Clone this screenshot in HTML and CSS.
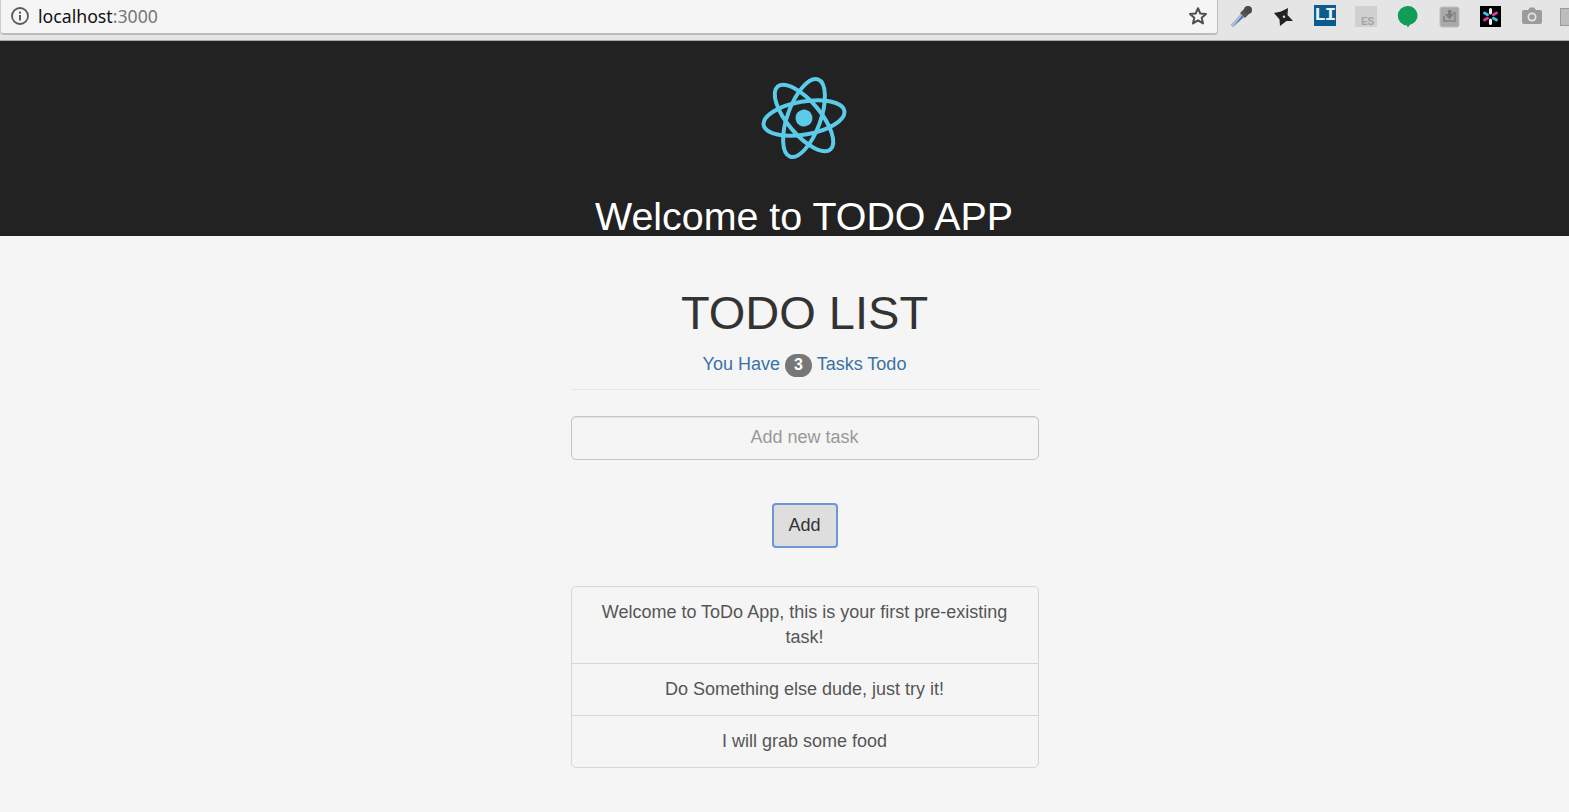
FILE: index.html
```html
<!DOCTYPE html>
<html lang="en">
<head>
<meta charset="utf-8">
<title>TODO APP</title>
<link rel="stylesheet" href="styles.css">
</head>
<body>
<div class="chrome">
  <div class="omnibox">
    <svg class="info" width="20" height="20" viewBox="0 0 20 20"><circle cx="10" cy="10" r="8" fill="none" stroke="#5a5a5a" stroke-width="1.8"/><rect x="9" y="9" width="2" height="5.5" fill="#5a5a5a"/><rect x="9" y="5.6" width="2" height="2" fill="#5a5a5a"/></svg>
    <span class="url">localhost<span class="port">:3000</span></span>
    <svg class="star" width="20" height="20" viewBox="0 0 20 20"><path d="M10 2.200l2.300 5.300 5.700.5-4.300 3.800 1.300 5.600-5-3-5 3 1.300-5.600L2 8l5.700-.5z" fill="none" stroke="#4e4e4e" stroke-width="2" stroke-linejoin="round"/></svg>
  </div>
  <div class="exts">
    <svg class="ext" width="24" height="24" viewBox="0 0 24 24"><path d="M3 23l-2-2 10-11 3 3z" fill="#4f72c8"/><path d="M3 23l-2-2 10-11 1.300 1.300z" fill="#b4bccf"/><path d="M10 9l4-4 5 5-4 4z" fill="#555"/><circle cx="18" cy="6" r="4" fill="#4a4a4a"/></svg>
    <svg class="ext" width="24" height="24" viewBox="0 0 24 24"><path d="M3 9L10 7.500 17 4 16.500 11 22 17 15.500 17 9 22 8.500 15.500z" fill="#222"/><circle cx="13" cy="12.700" r="1.300" fill="#d0d0d0"/></svg>
    <div class="ext li">LI</div>
    <div class="ext es">ES</div>
    <svg class="ext" width="24" height="24" viewBox="0 0 24 24"><path d="M12 2a9.500 9.500 0 0 1 2 18.800L11.800 23.500 11 21.400A9.500 9.500 0 0 1 12 2z" fill="#0f9d58"/></svg>
    <svg class="ext" width="24" height="24" viewBox="0 0 24 24"><rect x="3" y="3" width="19" height="20" rx="2" fill="#a9a9a9" stroke="#bfbfbf"/><path d="M7 12v5h11v-8h-2" fill="none" stroke="#8c8c8c" stroke-width="2"/><path d="M11 6h3.500v4H17l-4.500 5.500L8 10h3z" fill="#7f7f7f"/></svg>
    <svg class="ext" width="24" height="24" viewBox="0 0 24 24"><rect x="1" y="2" width="21" height="21" fill="#000"/><g stroke-width="3" stroke-linecap="round"><path d="M11.500 5.500v3.500M11.500 16v3.500" stroke="#f3f3f3"/><path d="M5.500 9l3 1.700M14.500 14.300l3 1.700" stroke="#36c5e8"/><path d="M17.500 9l-3 1.700M8.500 14.300l-3 1.700" stroke="#e0359b"/></g></svg>
    <svg class="ext" width="24" height="24" viewBox="0 0 24 24"><path d="M4 6h4l2-2.500h4L16 6h4a2 2 0 0 1 2 2v10a2 2 0 0 1-2 2H4a2 2 0 0 1-2-2V8a2 2 0 0 1 2-2z" fill="#9b9b9b"/><circle cx="12" cy="13" r="4.500" fill="#e5e5e5"/><circle cx="12" cy="13" r="2.800" fill="#9b9b9b"/></svg>
    <div class="ext cut"></div>
  </div>
</div>
<header class="app-header">
  <svg class="logo" width="90" height="90" viewBox="0 0 90 90">
    <g transform="rotate(-10 45 45)">
      <g fill="none" stroke="#5bcbea" stroke-width="4">
        <ellipse cx="45" cy="45" rx="41" ry="16.500"/>
        <ellipse cx="45" cy="45" rx="41" ry="16.500" transform="rotate(60 45 45)"/>
        <ellipse cx="45" cy="45" rx="41" ry="16.500" transform="rotate(120 45 45)"/>
      </g>
      <circle cx="45" cy="45" r="8.500" fill="#5bcbea"/>
    </g>
  </svg>
  <h2 class="app-title">Welcome to TODO APP</h2>
</header>
<main class="todo">
  <h1 class="todo-title">TODO LIST</h1>
  <h4 class="todo-count">You Have <span class="badge">3</span> Tasks Todo</h4>
  <hr class="rule">
  <input class="task-input" type="text" placeholder="Add new task">
  <button class="add-btn" type="button">Add</button>
  <ul class="tasks">
    <li class="task">Welcome to ToDo App, this is your first pre-existing task!</li>
    <li class="task">Do Something else dude, just try it!</li>
    <li class="task">I will grab some food</li>
  </ul>
</main>
</body>
</html>
```
FILE: styles.css
```css
* { box-sizing: border-box; }
html, body { margin: 0; height: 812px; overflow: hidden; }
body { background: #f5f5f5; font-family: "Liberation Sans", Arial, sans-serif; color: #333; }

.chrome { height: 41px; display: flex; background: #e5e5e5; border-bottom: 1px solid #a8a8a8; }
.omnibox { width: 1218px; height: 35px; display: flex; align-items: center; padding: 0 10px 2px 9px; background: #f5f5f5; border: 1px solid #bcbcbc; border-top: 0; border-left-color: #ccc; border-radius: 0 0 4px 4px; border-bottom-width: 2px; }
.info { flex: none; }
.url { margin-left: 8px; font: 17.700px "Noto Sans", sans-serif; color: #111; flex: 1; }
.port { color: #777; }
.star { flex: none; margin-right: -1px; }

.exts { flex: 1; display: grid; grid-auto-flow: column; grid-auto-columns: 41.500px; align-items: start; justify-items: center; padding: 4px 0 0 3px; overflow: hidden; }
.ext { width: 24px; height: 24px; }
.li { background: #0a5c8f; color: #e8f2f8; font: 700 19px/21px "Liberation Mono", monospace; text-align: center; letter-spacing: -1px; width: 22px; height: 21px; margin-top: 1px; }
.es { background: #d0d0d0; color: #a4a4a4; font: 700 10px/10px "Liberation Sans", sans-serif; text-align: right; padding: 11px 3px 0 0; width: 22px; height: 21px; margin-top: 2px; }
.cut { background: #bcbcbc; border: 1px solid #9a9a9a; margin-top: 4px; width: 22px; height: 18px; justify-self: start; margin-left: 7px; }

.app-header { height: 195px; background: #222; color: #fff; text-align: center; padding: 32px 0 0 39px; }
.logo { display: block; margin: 0 auto; }
.app-title { margin: 33px 0 0; font-size: 39.400px; font-weight: 500; line-height: 40px; }

.todo { width: 468px; margin: 0 auto 0 570.500px; text-align: center; }
.todo-title { margin: 47px 0 0; font-size: 47px; font-weight: 500; line-height: 60px; }
.todo-count { margin: 9px 0 0; font-size: 18px; font-weight: 500; line-height: 25px; color: #3a72a6; }
.badge { display: inline-block; min-width: 27px; padding: 3px 9px 5px; border-radius: 13px; background: #777; color: #fff; font-size: 16px; font-weight: 700; line-height: 15.500px; vertical-align: middle; }
.rule { margin: 12px 0 0; border: 0; border-top: 1px solid #e6e6e6; }
.task-input { display: block; width: 100%; height: 44px; margin-top: 26px; padding: 6px 16px 8px; background: #f5f5f5; border: 1px solid #c4c4c4; border-radius: 5px; font: 18px "Liberation Sans", sans-serif; color: #555; text-align: center; box-shadow: inset 0 1px 1px rgba(0,0,0,.075); }
.task-input::placeholder { color: #999; opacity: 1; }
.add-btn { display: block; width: 66px; height: 45px; margin: 43px auto 0; padding: 0; background: #dedede; border: 2px solid #6d97d9; border-radius: 4px; font: 18px "Liberation Sans", sans-serif; color: #333; }
.tasks { list-style: none; margin: 38px 0 0; padding: 0; background: #f5f5f5; border: 1px solid #d6d6d6; border-radius: 5px; }
.task { padding: 13px 19px; font-size: 18px; line-height: 25px; color: #555; border-top: 1px solid #d6d6d6; }
.task:first-child { border-top: 0; }
```
